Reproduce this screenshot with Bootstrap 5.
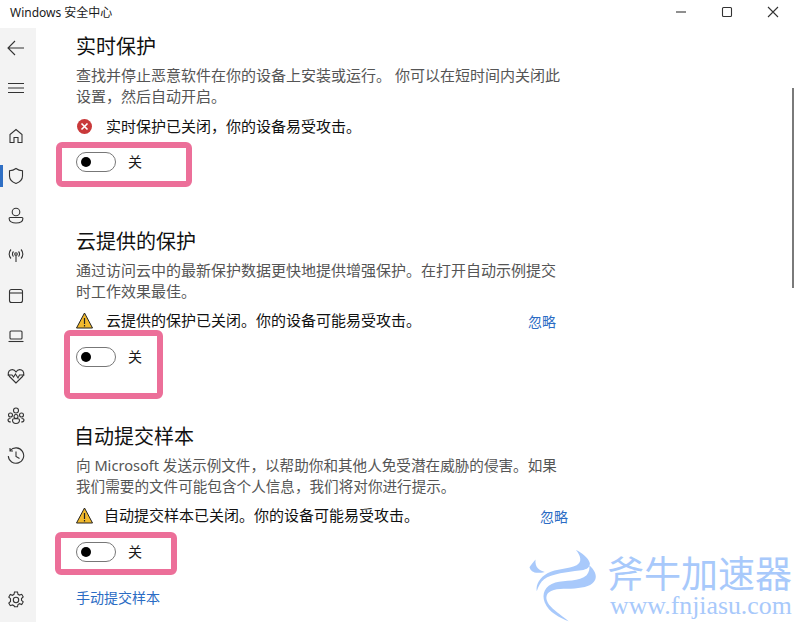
<!DOCTYPE html>
<html lang="zh-CN">
  <head>
    <meta charset="UTF-8" />
    <meta name="viewport" content="width=device-width, initial-scale=1.0" />
    <title>Windows 安全中心</title>
    <link href="https://cdn.jsdelivr.net/npm/bootstrap@5.3.3/dist/css/bootstrap.min.css" rel="stylesheet" />
    <style>
      html, body { height: 622px; overflow: hidden; }
      body { font-family: "Noto Sans", "Noto Sans CJK SC", sans-serif; color: #1a1a1a; background: #fff; position: relative; }
      .title-bar { height: 28px; font-size: 12px; padding-left: 10px; line-height: 25px; }
      .win-btn { width: 46px; height: 24px; }
      .win-group { margin-right: -2px; }
      .main-area { height: 594px; }
      .side-rail { width: 36px; background: #f3f3f3; }
      .rail-btn { height: 40px; position: relative; padding-right: 4px; }
      .rail-gap { height: 8px; }
      .rail-foot { margin-bottom: 2px; }
      .rail-btn.is-active::before { content: ""; position: absolute; left: 0; top: 9px; width: 3px; height: 22px; background: #2f6fc4; }
      .rail-btn svg, .win-btn svg { fill: none; stroke: #333; stroke-width: 1.1; }
      .page-body { padding-left: 40px; position: relative; }
      .prot-section { height: 195px; width: 490px; padding-top: 4px; }
      .prot-title { font-size: 20px; line-height: 28px; font-weight: 400; margin: 0 0 5px; color: #111; position: relative; top: 1px; }
      .title-shift { left: -2px; }
      .prot-desc { font-size: 15px; line-height: 21px; color: #555; margin: 0 0 9px; }
      .desc-narrow { font-size: 14.6px; }
      .prot-status { font-size: 15px; line-height: 22px; height: 22px; color: #111; position: relative; top: -1px; }
      .status-up { top: -2px; }
      .status-icon { width: 17px; height: 17px; margin-right: 13px; flex: none; }
      .icon-tight { margin-right: 11px; }
      .dismiss-link { font-size: 14px; color: #2b6cc4; text-decoration: none; position: absolute; top: 88px; white-space: nowrap; }
      .dismiss-b { left: 452px; }
      .dismiss-c { left: 464px; }
      .toggle-row { position: relative; margin-top: 14px; height: 20px; font-size: 14px; line-height: 20px; }
      .toggle-pill { width: 40px; height: 20px; border: 1px solid #777; border-radius: 10px; margin-right: 12px; padding-left: 4px; }
      .toggle-dot { width: 10px; height: 10px; border-radius: 50%; background: #000; }
      .pink-frame { position: absolute; border: 6px solid #ec6f99; border-radius: 6px; }
      .frame-a { left: -20px; top: -10px; width: 136px; height: 45px; }
      .frame-b { left: -12px; top: -17px; width: 99px; height: 69px; }
      .frame-c { left: -21px; top: -10px; width: 122px; height: 43px; }
      .manual-link { display: block; font-size: 14px; color: #2b6cc4; text-decoration: none; margin-top: 25px; }
      .scroll-thumb { position: absolute; right: 0; top: 88px; width: 2px; height: 200px; background: #7a7a7a; }
      .water-mark { position: absolute; right: 0; bottom: 0; width: 266px; height: 74px; color: #a8c9fb; }
      .water-logo { position: absolute; left: 0; top: 1px; width: 70px; height: 73px; fill: #a8c9fb; }
      .water-cn { position: absolute; left: 79px; top: 8px; font-size: 37px; line-height: 36px; white-space: nowrap; }
      .water-en { position: absolute; left: 82px; top: 47px; font-family: "Liberation Serif", serif; font-size: 25.8px; line-height: 22px; white-space: nowrap; }
    </style>
  </head>

  <body>
    <div class="title-bar d-flex align-items-start justify-content-between">
      <span>Windows 安全中心</span>
      <div class="win-group d-flex">
        <div class="win-btn d-flex align-items-center justify-content-center">
          <svg width="12" height="12" viewBox="0 0 12 12"><path d="M1 6h10" /></svg>
        </div>
        <div class="win-btn d-flex align-items-center justify-content-center">
          <svg width="12" height="12" viewBox="0 0 12 12"><rect x="1.500" y="1.500" width="9" height="9" rx="1" /></svg>
        </div>
        <div class="win-btn d-flex align-items-center justify-content-center">
          <svg width="12" height="12" viewBox="0 0 12 12"><path d="M1 1l10 10M11 1L1 11" /></svg>
        </div>
      </div>
    </div>

    <div class="main-area d-flex">
      <nav class="side-rail d-flex flex-column flex-shrink-0">
        <div class="rail-btn d-flex align-items-center justify-content-center">
          <svg width="18" height="18" viewBox="0 0 18 18"><path d="M1 9h16M8 2L1 9l7 7" /></svg>
        </div>
        <div class="rail-btn d-flex align-items-center justify-content-center">
          <svg width="16" height="16" viewBox="0 0 16 16"><path d="M0 3.500h16M0 8h16M0 12.500h16" /></svg>
        </div>
        <div class="rail-gap"></div>
        <div class="rail-btn d-flex align-items-center justify-content-center">
          <svg width="16" height="16" viewBox="0 0 16 16"><path d="M2 14.500V6.500L8 1.500l6 5v8h-4v-5H6v5z" /></svg>
        </div>
        <div class="rail-btn is-active d-flex align-items-center justify-content-center">
          <svg width="16" height="18" viewBox="0 0 16 18"><path d="M8 1.500c2 1.500 4 2.200 6.500 2.300V9c0 3.500-2.500 6-6.500 7.500C4 15 1.500 12.500 1.500 9V3.800C4 3.700 6 3 8 1.500z" /></svg>
        </div>
        <div class="rail-btn d-flex align-items-center justify-content-center">
          <svg width="16" height="18" viewBox="0 0 16 18"><circle cx="8" cy="5" r="3.800" /><path d="M2 10.500h12c.6 0 .9.400.9 1 0 3-3 4.500-6.900 4.500S1.100 14.500 1.100 11.500c0-.6.300-1 .9-1z" /></svg>
        </div>
        <div class="rail-btn d-flex align-items-center justify-content-center">
          <svg width="18" height="16" viewBox="0 0 18 16"><circle cx="9" cy="6" r="1.300" /><path d="M9 7.500V14M6.500 3.500a3.500 3.500 0 0 0 0 5M11.500 3.500a3.500 3.500 0 0 1 0 5M4 1.500a6.500 6.500 0 0 0 0 9M14 1.500a6.500 6.500 0 0 1 0 9" /></svg>
        </div>
        <div class="rail-btn d-flex align-items-center justify-content-center">
          <svg width="16" height="16" viewBox="0 0 16 16"><rect x="1.500" y="1.500" width="13" height="13" rx="2" /><path d="M1.500 5h13" /></svg>
        </div>
        <div class="rail-btn d-flex align-items-center justify-content-center">
          <svg width="18" height="16" viewBox="0 0 18 16"><rect x="3" y="3" width="12" height="8" rx="1" /><path d="M1.500 13.500h15" /></svg>
        </div>
        <div class="rail-btn d-flex align-items-center justify-content-center">
          <svg width="18" height="16" viewBox="0 0 18 16"><path d="M9 15L2.500 8.500C.5 6.500 1 3 3.500 2 5.500 1.200 7.800 2 9 4c1.200-2 3.500-2.800 5.500-2 2.500 1 3 4.500 1 6.500z" /><path d="M.5 7h4.500l1.500 2 2-3 2.500 4 1.500-3h5" /></svg>
        </div>
        <div class="rail-btn d-flex align-items-center justify-content-center">
          <svg width="18" height="18" viewBox="0 0 18 18"><circle cx="9" cy="3.500" r="2.500" /><circle cx="3.500" cy="8" r="2" /><circle cx="14.500" cy="8" r="2" /><circle cx="9" cy="9.500" r="2" /><path d="M5.500 13c0-1 .7-1.300 1.500-1.300h4c.8 0 1.500.3 1.500 1.300 0 2-1.500 3.500-3.500 3.500S5.500 15 5.500 13zM3.500 11.500C2 11.500 1 12 1 13c0 1 1 2 2.800 2M14.500 11.500c1.500 0 2.500.5 2.500 1.500 0 1-1 2-2.800 2" /></svg>
        </div>
        <div class="rail-btn d-flex align-items-center justify-content-center">
          <svg width="18" height="18" viewBox="0 0 18 18"><path d="M3.200 3.500A7.700 7.700 0 1 1 1.300 9M3 1v3h3M9 4.500V9.500l3.500 2" /></svg>
        </div>
        <div class="rail-btn rail-foot d-flex align-items-center justify-content-center mt-auto">
          <svg width="18" height="18" viewBox="0 0 18 18"><circle cx="9" cy="9" r="2.700" /><path d="M7.500 1h3l.5 2.300 1.500.8 2.200-.8 1.500 2.600-1.700 1.600v1.800l1.700 1.600-1.500 2.600-2.200-.8-1.500.8-.5 2.300h-3L7 14.700l-1.500-.8-2.200.8-1.500-2.600 1.700-1.600V7.700L1.800 6.100l1.500-2.600 2.200.8L7 3.300z" /></svg>
        </div>
      </nav>

      <main class="page-body flex-grow-1">
        <section class="prot-section">
          <h2 class="prot-title">实时保护</h2>
          <p class="prot-desc">查找并停止恶意软件在你的设备上安装或运行。 你可以在短时间内关闭此设置，然后自动开启。</p>
          <div class="prot-status d-flex align-items-center">
            <svg class="status-icon" viewBox="0 0 17 17"><circle cx="8.500" cy="8.500" r="7.500" fill="#c9393a" /><path d="M5.500 5.500l6 6M11.500 5.500l-6 6" stroke="#fff" stroke-width="1.600" /></svg>
            <span>实时保护已关闭，你的设备易受攻击。</span>
          </div>
          <div class="toggle-row d-flex align-items-center">
            <div class="pink-frame frame-a"></div>
            <div class="toggle-pill d-flex align-items-center"><div class="toggle-dot"></div></div>
            <span>关</span>
          </div>
        </section>

        <section class="prot-section position-relative">
          <h2 class="prot-title">云提供的保护</h2>
          <p class="prot-desc">通过访问云中的最新保护数据更快地提供增强保护。在打开自动示例提交时工作效果最佳。</p>
          <div class="prot-status status-up d-flex align-items-center">
            <svg class="status-icon" viewBox="0 0 17 17"><path d="M8.500 1L16.500 16H.5z" fill="#f2b92c" stroke="#222" stroke-width="1" /><path d="M8.500 6v6M8.500 13v1.500" stroke="#222" stroke-width="1.200" /></svg>
            <span>云提供的保护已关闭。你的设备可能易受攻击。</span>
          </div>
          <a href="#" class="dismiss-link dismiss-b">忽略</a>
          <div class="toggle-row d-flex align-items-center">
            <div class="pink-frame frame-b"></div>
            <div class="toggle-pill d-flex align-items-center"><div class="toggle-dot"></div></div>
            <span>关</span>
          </div>
        </section>

        <section class="prot-section position-relative">
          <h2 class="prot-title title-shift">自动提交样本</h2>
          <p class="prot-desc desc-narrow">向 Microsoft 发送示例文件，以帮助你和其他人免受潜在威胁的侵害。如果我们需要的文件可能包含个人信息，我们将对你进行提示。</p>
          <div class="prot-status status-up d-flex align-items-center">
            <svg class="status-icon icon-tight" viewBox="0 0 17 17"><path d="M8.500 1L16.500 16H.5z" fill="#f2b92c" stroke="#222" stroke-width="1" /><path d="M8.500 6v6M8.500 13v1.500" stroke="#222" stroke-width="1.200" /></svg>
            <span>自动提交样本已关闭。你的设备可能易受攻击。</span>
          </div>
          <a href="#" class="dismiss-link dismiss-c">忽略</a>
          <div class="toggle-row d-flex align-items-center">
            <div class="pink-frame frame-c"></div>
            <div class="toggle-pill d-flex align-items-center"><div class="toggle-dot"></div></div>
            <span>关</span>
          </div>
          <a href="#" class="manual-link">手动提交样本</a>
        </section>
      </main>
    </div>

    <div class="scroll-thumb"></div>

    <div class="water-mark">
      <svg class="water-logo" viewBox="50 115 210 220">
        <path d="M72 147C66 156 58 163 54 170C58 182 68 192 100 184C84 180 70 172 72 147z" />
        <path d="M194 118C212 126 232 142 236 158C236 174 222 178 204 180C170 184 120 190 98 206C88 214 80 228 76 242C72 222 86 200 108 188C134 174 172 176 196 164C214 154 208 134 194 118z" />
        <path d="M234 164C250 178 258 194 252 208C244 226 220 232 190 234C160 236 130 232 112 246C100 256 104 274 118 288C132 304 156 318 172 333C146 322 112 306 100 276C90 250 100 226 132 216C160 208 206 214 226 194C234 184 236 174 234 164z" />
      </svg>
      <div class="water-cn">斧牛加速器</div>
      <div class="water-en">www.fnjiasu.com</div>
    </div>

    <script src="https://cdn.jsdelivr.net/npm/bootstrap@5.3.3/dist/js/bootstrap.bundle.min.js"></script>
  </body>
</html>
